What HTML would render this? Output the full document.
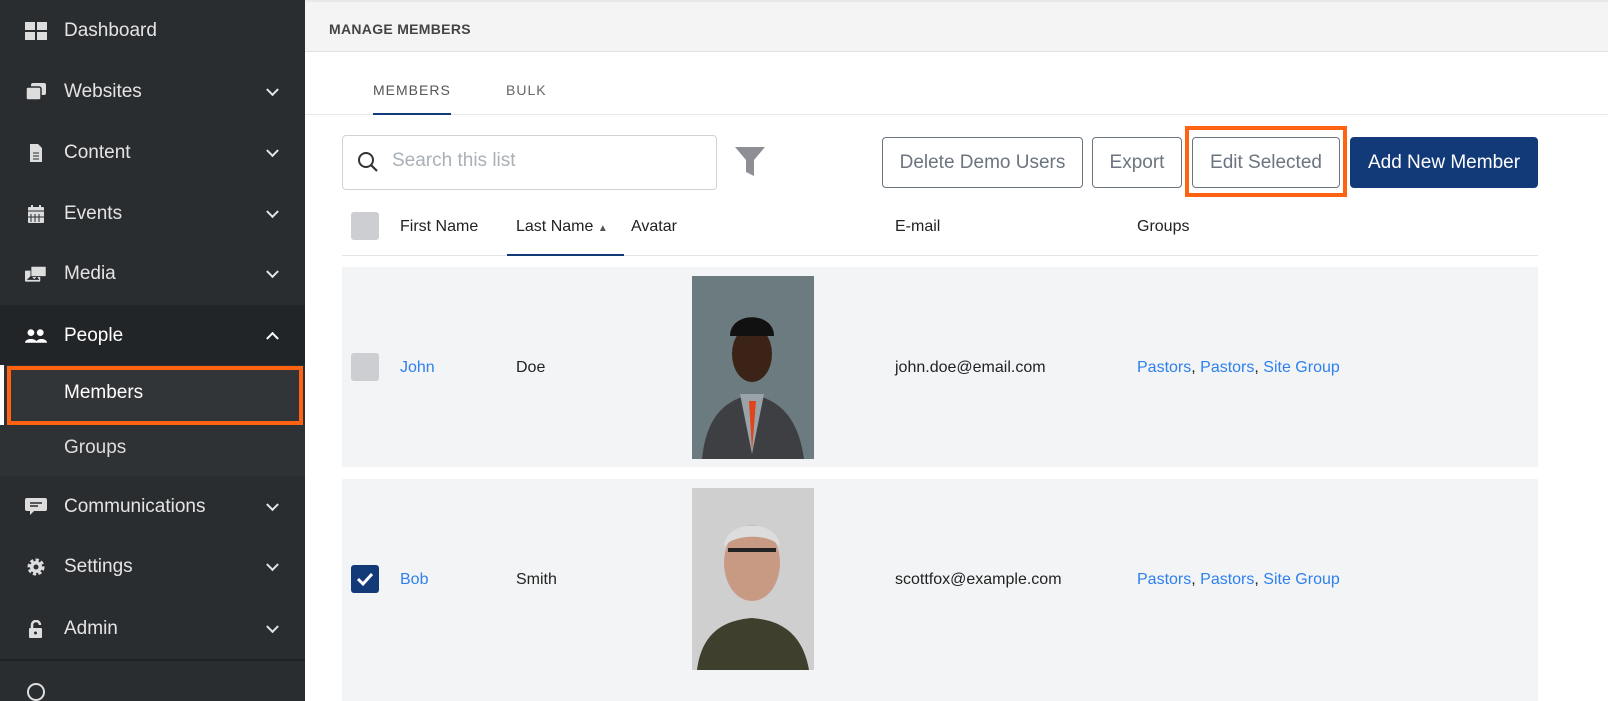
<!DOCTYPE html>
<html><head><style>
*{margin:0;padding:0;box-sizing:border-box}
body{width:1608px;height:701px;overflow:hidden;font-family:"Liberation Sans",sans-serif;background:#fff;position:relative;color:#222}
.sb{position:absolute;left:0;top:0;width:305px;height:701px;background:#2a2d30}
.it{position:absolute;left:0;width:305px;height:61px;color:#e4e4e4;font-size:19px}
.it .ic{position:absolute;left:25px;top:50%;transform:translateY(-50%);width:22px;height:18px}
.it .t{position:absolute;left:64px;top:50%;transform:translateY(-50%)}
.it .ch{position:absolute;left:268px;top:50%;width:9px;height:9px;border-right:2.5px solid #e4e4e4;border-bottom:2.5px solid #e4e4e4;transform:translateY(-75%) rotate(45deg)}
.a{position:absolute}
.btn{position:absolute;top:137px;height:51px;border:1px solid #6c7480;border-radius:4px;color:#6c7480;font-size:19px;display:flex;align-items:center;justify-content:center}
.lnk{color:#2f80ed}
.cell{position:absolute;font-size:16px}
</style></head><body>
<div class="sb">
 <div class="it" style="top:0"><svg class="ic" viewBox="0 0 22 18"><rect x="0" y="0" width="10" height="8" fill="#ddd"/><rect x="12" y="0" width="10" height="8" fill="#ddd"/><rect x="0" y="10" width="10" height="8" fill="#ddd"/><rect x="12" y="10" width="10" height="8" fill="#ddd"/></svg><span class="t">Dashboard</span></div>
 <div class="it" style="top:61px"><svg class="ic" viewBox="0 0 22 18"><rect x="6" y="0" width="15" height="12" rx="2" fill="#ddd"/><rect x="1" y="4" width="15" height="13" rx="2" fill="#ddd" stroke="#2a2d30" stroke-width="1.5"/></svg><span class="t">Websites</span><span class="ch"></span></div>
 <div class="it" style="top:122px"><svg class="ic" viewBox="0 0 22 18"><path d="M5 0h8l4 4v14H5z" fill="#ddd"/><path d="M8 9h6M8 12h6M8 15h6" stroke="#2a2d30"/></svg><span class="t">Content</span><span class="ch"></span></div>
 <div class="it" style="top:183px"><svg class="ic" viewBox="0 0 22 18"><rect x="3" y="2" width="16" height="16" rx="1" fill="#ddd"/><rect x="6" y="0" width="2" height="4" fill="#ddd"/><rect x="14" y="0" width="2" height="4" fill="#ddd"/><path d="M3 6h16M6 9v8M10 9v8M14 9v8M3 12h16" stroke="#2a2d30"/></svg><span class="t">Events</span><span class="ch"></span></div>
 <div class="it" style="top:243px"><svg class="ic" viewBox="0 0 26 18"><rect x="0" y="5" width="18" height="13" rx="1" fill="#ddd"/><rect x="7" y="0" width="18" height="12" rx="1" fill="#ddd" stroke="#2a2d30"/><path d="M2 16l5-5 4 4 3-3 3 4z" fill="#2a2d30"/></svg><span class="t">Media</span><span class="ch"></span></div>
 <div class="a" style="top:305px;left:0;width:305px;height:60px;background:#222528"></div>
 <div class="it" style="top:305px;color:#fff"><svg class="ic" viewBox="0 0 26 18"><circle cx="7" cy="5" r="4" fill="#fff"/><path d="M0 17c0-6 14-6 14 0z" fill="#fff"/><circle cx="18" cy="5" r="4" fill="#fff"/><path d="M13 17c0-6 13-6 13 0z" fill="#fff"/></svg><span class="t">People</span><span class="ch" style="transform:translateY(-25%) rotate(225deg);border-color:#fff"></span></div>
 <div class="a" style="top:365px;left:0;width:305px;height:111px;background:#2f3235"></div>
 <div class="a" style="top:365px;left:0;width:4px;height:60px;background:#fff"></div>
 <div class="a" style="top:366px;left:7px;width:296px;height:59px;border:4px solid #ff6210;background:#323538"></div>
 <div class="a" style="top:382px;left:64px;font-size:19px;color:#fff">Members</div>
 <div class="a" style="top:437px;left:64px;font-size:19px;color:#ddd">Groups</div>
 <div class="it" style="top:476px"><svg class="ic" viewBox="0 0 22 18"><path d="M2 0h18a2 2 0 012 2v9a2 2 0 01-2 2H9l-4 4v-4H2a2 2 0 01-2-2V2a2 2 0 012-2z" fill="#ddd"/><path d="M5 5h12M5 8h8" stroke="#2a2d30" stroke-width="1.5"/></svg><span class="t">Communications</span><span class="ch"></span></div>
 <div class="it" style="top:536px"><svg class="ic" viewBox="0 0 22 18"><circle cx="11" cy="9" r="6.5" fill="none" stroke="#ddd" stroke-width="4" stroke-dasharray="3 2"/><circle cx="11" cy="9" r="6" fill="#ddd"/><circle cx="11" cy="9" r="2.5" fill="#2a2d30"/></svg><span class="t">Settings</span><span class="ch"></span></div>
 <div class="it" style="top:598px"><svg class="ic" viewBox="0 0 22 18"><path d="M7 8V5a4 4 0 018 0" fill="none" stroke="#ddd" stroke-width="2.5"/><rect x="4" y="8" width="13" height="10" rx="1" fill="#ddd"/><circle cx="10.5" cy="13" r="1.5" fill="#2a2d30"/></svg><span class="t">Admin</span><span class="ch"></span></div>
 <div class="a" style="top:659px;left:0;width:305px;height:2px;background:#1f2224"></div>
 <div class="a" style="top:683px;left:27px;width:18px;height:18px;border:2.5px solid #ddd;border-radius:50%"></div>
</div>

<div class="a" style="left:305px;top:0;width:1303px;height:52px;background:#f4f4f4;border-bottom:1px solid #e2e2e2;border-top:2px solid #e8e8e8"></div>
<div class="a" style="left:329px;top:21px;font-size:14px;font-weight:bold;color:#444;letter-spacing:.3px">MANAGE MEMBERS</div>
<div class="a" style="left:373px;top:82px;font-size:14px;color:#555;letter-spacing:1px">MEMBERS</div>
<div class="a" style="left:506px;top:82px;font-size:14px;color:#666;letter-spacing:1px">BULK</div>
<div class="a" style="left:305px;top:114px;width:1303px;height:1px;background:#e8e8e8"></div>
<div class="a" style="left:373px;top:113px;width:78px;height:2px;background:#133a78"></div>

<div class="a" style="left:342px;top:135px;width:375px;height:55px;border:1px solid #cfd3d8;border-radius:4px"></div>
<svg class="a" style="left:357px;top:151px" width="22" height="22" viewBox="0 0 22 22"><circle cx="9" cy="9" r="7" fill="none" stroke="#333" stroke-width="2"/><path d="M14 14l6 6" stroke="#333" stroke-width="2.2"/></svg>
<div class="a" style="left:392px;top:150px;font-size:19px;color:#aab0b8">Search this list</div>
<svg class="a" style="left:735px;top:146px" width="30" height="32" viewBox="0 0 30 32"><path d="M0 1h30L19 14v16l-8-4V14z" fill="#8d8f95"/></svg>

<div class="btn" style="left:882px;width:201px">Delete Demo Users</div>
<div class="btn" style="left:1092px;width:90px">Export</div>
<div class="btn" style="left:1192px;width:148px">Edit Selected</div>
<div class="a" style="left:1185px;top:126px;width:162px;height:71px;border:4px solid #ff6210"></div>
<div class="btn" style="left:1350px;width:188px;background:#133a78;border-color:#133a78;color:#fff">Add New Member</div>

<div class="a" style="left:351px;top:212px;width:28px;height:28px;background:#ccced1;border-radius:3px"></div>
<div class="cell" style="left:400px;top:218px">First Name</div>
<div class="cell" style="left:516px;top:218px">Last Name <span style="font-size:10px;color:#555">▲</span></div>
<div class="cell" style="left:631px;top:218px">Avatar</div>
<div class="cell" style="left:895px;top:218px">E-mail</div>
<div class="cell" style="left:1137px;top:218px">Groups</div>
<div class="a" style="left:342px;top:255px;width:1196px;height:1px;background:#e4e6e9"></div>
<div class="a" style="left:507px;top:254px;width:117px;height:2px;background:#133a78"></div>

<div class="a" style="left:342px;top:267px;width:1196px;height:200px;background:#f3f4f6"></div>
<div class="a" style="left:351px;top:353px;width:28px;height:28px;background:#ccced1;border-radius:3px"></div>
<div class="cell lnk" style="left:400px;top:359px">John</div>
<div class="cell" style="left:516px;top:359px">Doe</div>
<svg class="a" style="left:692px;top:276px" width="122" height="183" viewBox="0 0 122 183"><rect width="122" height="183" fill="#6c7b80"/><path d="M10 183c5-50 30-60 50-65 20 5 45 15 52 65z" fill="#3d3f42"/><path d="M48 118l12 60 12-60z" fill="#9aa3a8"/><path d="M57 125l3 50 4-50z" fill="#e0441b"/><ellipse cx="60" cy="78" rx="20" ry="28" fill="#3b2417"/><path d="M38 60c0-25 44-25 44 0z" fill="#111"/></svg>
<div class="cell" style="left:895px;top:359px">john.doe@email.com</div>
<div class="cell" style="left:1137px;top:359px"><span class="lnk">Pastors</span>, <span class="lnk">Pastors</span>, <span class="lnk">Site Group</span></div>

<div class="a" style="left:342px;top:479px;width:1196px;height:222px;background:#f3f4f6"></div>
<div class="a" style="left:351px;top:565px;width:28px;height:28px;background:#133a78;border-radius:3px"></div>
<svg class="a" style="left:355px;top:569px" width="20" height="20" viewBox="0 0 20 20"><path d="M3 10l5 5 9-10" fill="none" stroke="#fff" stroke-width="3"/></svg>
<div class="cell lnk" style="left:400px;top:571px">Bob</div>
<div class="cell" style="left:516px;top:571px">Smith</div>
<svg class="a" style="left:692px;top:488px" width="122" height="182" viewBox="0 0 122 182"><rect width="122" height="182" fill="#cfcfcf"/><path d="M5 182c5-40 30-50 55-52 25 2 50 12 57 52z" fill="#3e3f2c"/><ellipse cx="60" cy="75" rx="28" ry="38" fill="#c99a83"/><path d="M32 60c0-30 56-30 56 0c-5-15-50-15-56 0z" fill="#ddd"/><path d="M36 62h48" stroke="#222" stroke-width="4"/></svg>
<div class="cell" style="left:895px;top:571px">scottfox@example.com</div>
<div class="cell" style="left:1137px;top:571px"><span class="lnk">Pastors</span>, <span class="lnk">Pastors</span>, <span class="lnk">Site Group</span></div>
</body></html>
